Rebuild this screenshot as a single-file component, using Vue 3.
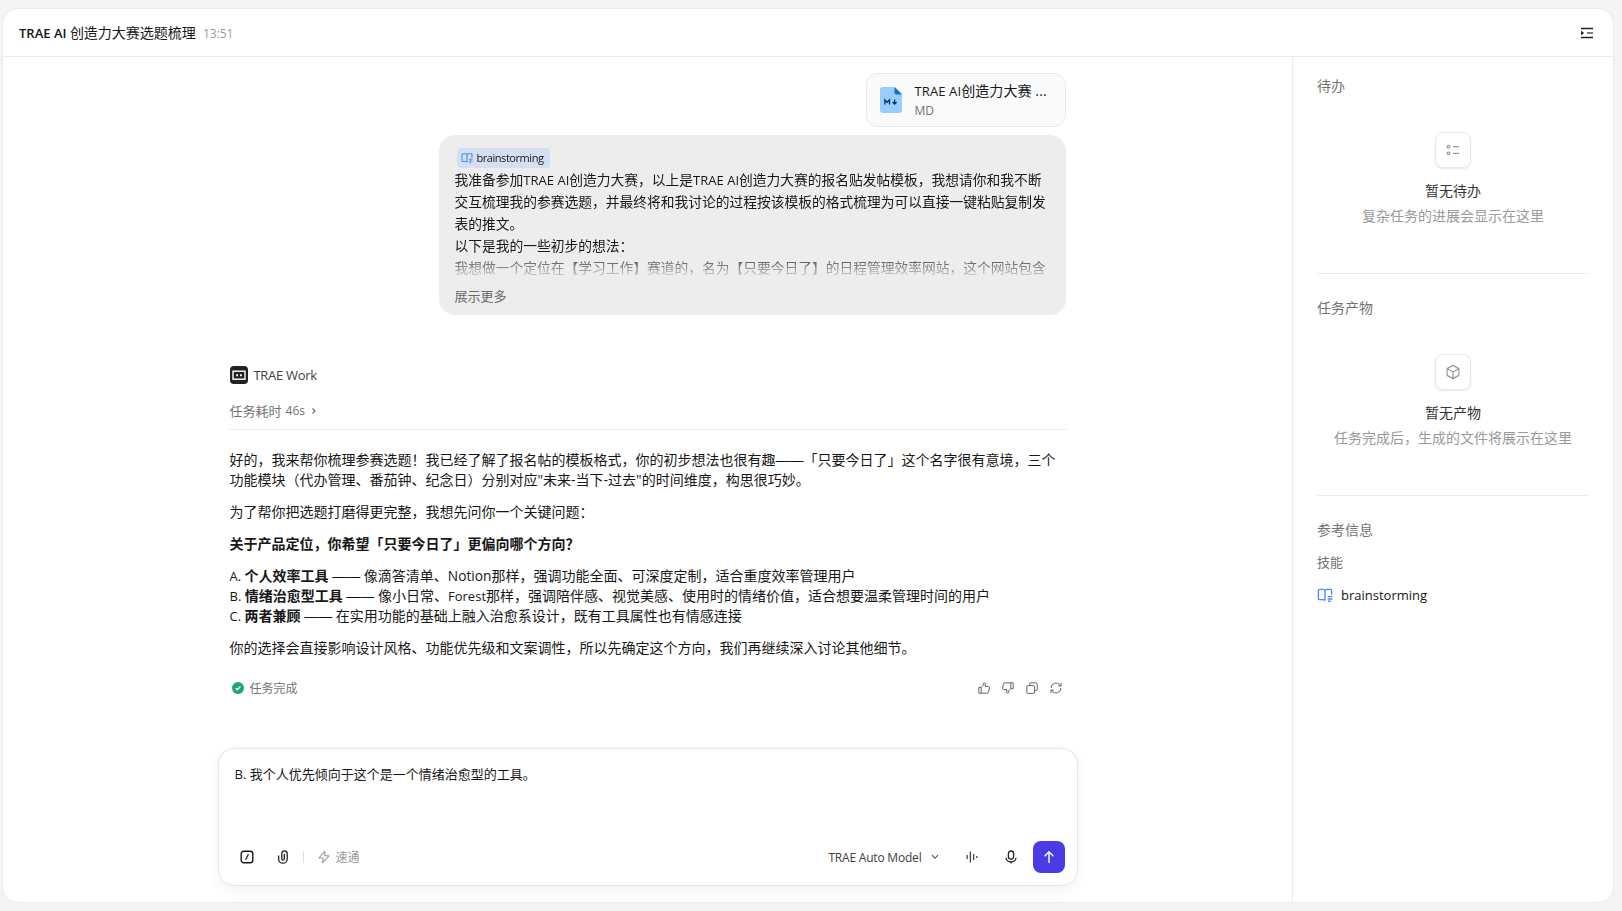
<template>
  <div class="page">
    <div class="panel">
      <header class="header">
        <div class="title"><span class="en">TRAE AI </span>创造力大赛选题梳理</div>
        <div class="time">13:51</div>
        <svg class="toggle" width="14" height="14" viewBox="0 0 14 14">
          <path d="M1 2.5h12M1 11.5h12" stroke="#222" stroke-width="1.3" />
          <path d="M7 7h6" stroke="#555" stroke-width="1.3" />
          <path d="M1 4.8v4.4L4.2 7z" fill="#222" />
        </svg>
      </header>
      <div class="content">
        <main class="main">
          <div class="chat">
            <div class="file">
              <svg class="file-icon" width="22" height="26" viewBox="0 0 22 26">
                <path d="M3 0h12l7 7v16a3 3 0 0 1-3 3H3a3 3 0 0 1-3-3V3a3 3 0 0 1 3-3z" fill="#99cdff" />
                <path d="M14.5 0L22 7.4h-5.5a2 2 0 0 1-2-2z" fill="#1270cc" />
                <path
                  d="M4.9 17.4v-4.6l2.3 2.5 2.3-2.5v4.6M14.6 12.4v4.6M12.6 15l2 2 2-2"
                  fill="none"
                  stroke="#0b3560"
                  stroke-width="1.3"
                />
              </svg>
              <div>
                <div class="file-name"><span class="en">TRAE AI</span>创造力大赛 ...</div>
                <div class="file-type">MD</div>
              </div>
            </div>

            <div class="bubble">
              <div class="bubble-text">
                <div class="tag-line">
                  <span class="tag">
                    <svg width="12" height="12" viewBox="0 0 16 16">
                      <path :d="bookPath" fill="none" stroke="#4c8bf5" stroke-width="1.5" />
                    </svg>
                    brainstorming
                  </span>
                </div>
                <div>
                  我准备参加<span class="en">TRAE AI</span>创造力大赛，以上是<span class="en">TRAE AI</span>创造力大赛的报名贴发帖模板，我想请你和我不断
                </div>
                <div v-for="line in userLines" :key="line">{{ line }}</div>
              </div>
              <div class="more">展示更多</div>
            </div>

            <div class="agent">
              <svg width="18" height="18" viewBox="0 0 18 18">
                <rect width="18" height="18" rx="4" fill="#222" />
                <rect x="3" y="5.2" width="12" height="8" fill="none" stroke="#fff" stroke-width="1.4" />
                <path d="M6.2 8.2h1.8v2H6.2zM10 8.2h1.8v2H10z" fill="#fff" />
              </svg>
              <span>TRAE Work</span>
            </div>
            <div class="cost">
              任务耗时 <span class="en">46s</span>
              <svg width="6" height="8" viewBox="0 0 6 8">
                <path d="M1.5 1.5L4 4 1.5 6.5" fill="none" stroke="#666" stroke-width="1.1" />
              </svg>
            </div>

            <div class="answer">
              <p>
                好的，我来帮你梳理参赛选题！我已经了解了报名帖的模板格式，你的初步想法也很有趣<span class="dash">——</span>「只要今日了」这个名字很有意境，三个<br />功能模块（代办管理、番茄钟、纪念日）分别对应"未来-当下-过去"的时间维度，构思很巧妙。
              </p>
              <p>为了帮你把选题打磨得更完整，我想先问你一个关键问题：</p>
              <p><b>关于产品定位，你希望「只要今日了」更偏向哪个方向？</b></p>
              <p>
                <span class="en">A. </span><b>个人效率工具</b> <span class="dash">——</span> 像滴答清单、<span class="en wide">Notion</span>那样，强调功能全面、可深度定制，适合重度效率管理用户<br />
                <span class="en">B. </span><b>情绪治愈型工具</b> <span class="dash">——</span> 像小日常、<span class="en">Forest</span>那样，强调陪伴感、视觉美感、使用时的情绪价值，适合想要温柔管理时间的用户<br />
                <span class="en">C. </span><b>两者兼顾</b> <span class="dash">——</span> 在实用功能的基础上融入治愈系设计，既有工具属性也有情感连接
              </p>
              <p>你的选择会直接影响设计风格、功能优先级和文案调性，所以先确定这个方向，我们再继续深入讨论其他细节。</p>
            </div>

            <div class="status">
              <svg width="12" height="12" viewBox="0 0 12 12">
                <circle cx="6" cy="6" r="6" fill="#1aa675" />
                <path d="M3.6 6.2l1.7 1.6 3.1-3.3" fill="none" stroke="#fff" stroke-width="1.3" />
              </svg>
              <span>任务完成</span>
              <div class="actions">
                <svg v-for="icon in actions" :key="icon" width="12" height="12" viewBox="0 0 12 12">
                  <path :d="icon" fill="none" stroke="#666" stroke-width="1" stroke-linejoin="round" />
                </svg>
              </div>
            </div>
          </div>

          <div class="composer">
            <div class="draft"><span class="en">B. </span>我个人优先倾向于这个是一个情绪治愈型的工具。</div>
            <div class="tools">
              <svg class="slash" width="14" height="14" viewBox="0 0 14 14">
                <rect x="1.2" y="1.2" width="11.6" height="11.6" rx="2.6" fill="none" stroke="#1a1a1a" stroke-width="1.4" />
                <path d="M8.4 4.2l-2.8 5.6" stroke="#1a1a1a" stroke-width="1.3" />
              </svg>
              <svg class="clip" width="12" height="14" viewBox="0 0 12 14">
                <path
                  d="M1.6 5.6v3.3a4.3 4.3 0 0 0 8.6 0V3.6a2.7 2.7 0 0 0-5.4 0v5.2a1.25 1.25 0 0 0 2.5 0V4"
                  fill="none"
                  stroke="#222"
                  stroke-width="1.3"
                />
              </svg>
              <i class="split"></i>
              <svg class="bolt" width="12" height="14" viewBox="0 0 12 14">
                <path d="M7 1.2L1 8h4.2L4.6 12.6 11 5.8H6.7z" fill="none" stroke="#999" stroke-width="1.1" stroke-linejoin="round" />
              </svg>
              <span class="fast">速通</span>
              <span class="model">TRAE Auto Model</span>
              <svg class="arrow" width="8" height="6" viewBox="0 0 8 6">
                <path d="M1 1.2l3 3 3-3" fill="none" stroke="#555" stroke-width="1.1" />
              </svg>
              <svg class="wave" width="12" height="12" viewBox="0 0 12 12">
                <path d="M1.2 4v4M4.4 .6v10.8M7.6 3v6M10.8 5v2" stroke="#444" stroke-width="1.3" />
              </svg>
              <svg class="mic" width="12" height="14" viewBox="0 0 12 14">
                <rect x="3.4" y="1" width="5.2" height="8.2" rx="2.6" fill="none" stroke="#222" stroke-width="1.3" />
                <path d="M1 7.8a5 4 0 0 0 10 0M6 11.6v1.8" fill="none" stroke="#222" stroke-width="1.3" />
              </svg>
              <button class="send">
                <svg width="12" height="14" viewBox="0 0 12 14">
                  <path d="M6 13V2M1.6 6.2L6 1.8l4.4 4.4" fill="none" stroke="#fff" stroke-width="1.4" />
                </svg>
              </button>
            </div>
          </div>
        </main>

        <aside class="side">
          <section v-for="item in sections" :key="item.title" class="section">
            <div class="section-title">{{ item.title }}</div>
            <div class="empty-icon">
              <svg width="16" height="16" viewBox="0 0 16 16">
                <path :d="item.icon" fill="none" stroke="#999" stroke-width="1.2" stroke-linejoin="round" />
              </svg>
            </div>
            <div class="empty-title">{{ item.empty }}</div>
            <div class="empty-desc">{{ item.desc }}</div>
          </section>
          <section class="section last">
            <div class="section-title">参考信息</div>
            <div class="sub-title">技能</div>
            <div class="skill">
              <svg width="16" height="16" viewBox="0 0 16 16">
                <path :d="bookPath" fill="none" stroke="#4c8bf5" stroke-width="1.4" />
              </svg>
              <span>brainstorming</span>
            </div>
          </section>
        </aside>
      </div>
    </div>
  </div>
</template>

<script setup>
  const bookPath =
    'M8 13.6V3.6M8 3.6C7.5 2.7 6.8 2.4 6 2.4H2.4a1 1 0 0 0-1 1v8.2a1 1 0 0 0 1 1H6c.8 0 1.5.3 2 1M8 3.6c.5-.9 1.2-1.2 2-1.2h3.6a1 1 0 0 1 1 1v4.4M10.6 9.6h4.8M10.6 12h4.8M11 14.3h2.6';

  const userLines = [
    '交互梳理我的参赛选题，并最终将和我讨论的过程按该模板的格式梳理为可以直接一键粘贴复制发',
    '表的推文。',
    '以下是我的一些初步的想法：',
    '我想做一个定位在【学习工作】赛道的，名为【只要今日了】的日程管理效率网站，这个网站包含',
  ];

  // like, dislike, copy, retry
  const actions = [
    'M.8 5.4h2.4v5.8H.8zM3.2 5.4L5.4 3V1.6a1 1 0 0 1 1.9 0L7.2 4.4h3.1a1.1 1.1 0 0 1 1.1 1.3l-.8 4.4a1.3 1.3 0 0 1-1.3 1.1H3.2',
    'M11.2 6.6H8.8V.8h2.4zM8.8 6.6L6.6 9v1.4a1 1 0 0 1-1.9 0l.1-2.8H1.7A1.1 1.1 0 0 1 .6 6.3L1.4 1.9A1.3 1.3 0 0 1 2.7.8h6.1',
    'M2.2 3.6h5a1.4 1.4 0 0 1 1.4 1.4v5a1.4 1.4 0 0 1-1.4 1.4h-5A1.4 1.4 0 0 1 .8 10V5a1.4 1.4 0 0 1 1.4-1.4zM3.4 3.4V2.2A1.4 1.4 0 0 1 4.8.8h5a1.4 1.4 0 0 1 1.4 1.4v5a1.4 1.4 0 0 1-1.4 1.4H8.8',
    'M1 6a5 5 0 0 1 8.9-3.1l.9 1M11 1v3H8.2M11 6a5 5 0 0 1-8.9 3.1l-.9-1M1 11V8h2.8',
  ];

  const sections = [
    {
      title: '待办',
      empty: '暂无待办',
      desc: '复杂任务的进展会显示在这里',
      icon: 'M2.2 4.7a1.3 1.3 0 1 0 2.6 0a1.3 1.3 0 1 0-2.6 0M2.2 11.3a1.3 1.3 0 1 0 2.6 0a1.3 1.3 0 1 0-2.6 0M8 4.7h6M8 11.3h6',
    },
    {
      title: '任务产物',
      empty: '暂无产物',
      desc: '任务完成后，生成的文件将展示在这里',
      icon: 'M8 1.4l5.9 3.2v6.8L8 14.6l-5.9-3.2V4.6zM2.4 4.8L8 8l5.6-3.2M8 8v6.4',
    },
  ];
</script>

<style>
  body {
    margin: 0;
    background: #f4f4f4;
  }
</style>

<style scoped>
  .page {
    box-sizing: border-box;
    height: 911px;
    padding: 8px 8px 8px 2px;
    font-family: 'Open Sans', 'Noto Sans CJK SC', sans-serif;
    font-size: 14px;
    color: #171717;
    white-space: nowrap;
    overflow: hidden;
  }
  svg {
    display: block;
    flex-shrink: 0;
  }
  .en {
    font-size: 0.93em;
    line-height: 1;
    white-space: pre;
  }
  .en.wide {
    font-size: 0.98em;
  }
  .dash {
    font-family: 'Liberation Sans', sans-serif;
    line-height: 1;
  }
  .panel {
    box-sizing: border-box;
    display: flex;
    flex-direction: column;
    height: 100%;
    border: 1px solid #ececec;
    border-radius: 16px;
    background: #fff;
    overflow: hidden;
  }
  .header {
    display: flex;
    align-items: center;
    height: 47px;
    padding: 0 19px 0 16px;
    border-bottom: 1px solid #ececec;
  }
  .title {
    margin-top: -1px;
  }
  .title .en {
    font-weight: 600;
  }
  .time {
    margin: 1px 0 0 7px;
    font-size: 12px;
    color: #999;
  }
  .toggle {
    margin-left: auto;
  }
  .content {
    display: flex;
    flex: 1;
    min-height: 0;
  }
  .main {
    display: flex;
    flex: 1;
    flex-direction: column;
    align-items: center;
  }
  .chat {
    display: flex;
    flex-direction: column;
    width: 836px;
    height: 691px;
  }

  .file {
    box-sizing: border-box;
    display: flex;
    align-self: flex-end;
    align-items: center;
    width: 200px;
    height: 54px;
    margin-top: 16px;
    padding-left: 13px;
    border: 1px solid #e8e8e8;
    border-radius: 12px;
    background: #fafafa;
  }
  .file-icon {
    margin-right: 13px;
  }
  .file-name {
    font-size: 14px;
    line-height: 20px;
    letter-spacing: 0.1px;
  }
  .file-type {
    font-size: 12px;
    line-height: 18px;
    padding-top: 1px;
    margin-bottom: -1px;
    color: #737373;
  }

  .bubble {
    box-sizing: border-box;
    align-self: flex-end;
    width: 627px;
    height: 180px;
    margin-top: 8px;
    padding: 12px 16px;
    border-radius: 16px;
    background: #ededed;
  }
  .bubble-text {
    height: 129px;
    overflow: hidden;
    font-size: 13.75px;
    line-height: 22px;
    -webkit-mask-image: linear-gradient(#000 105px, transparent 133px);
    mask-image: linear-gradient(#000 105px, transparent 133px);
  }
  .bubble-text .en {
    font-size: 0.95em;
  }
  .tag-line {
    display: flex;
    align-items: center;
    height: 22px;
  }
  .tag {
    box-sizing: border-box;
    display: flex;
    align-items: center;
    gap: 4px;
    width: 93px;
    height: 20px;
    margin-left: 2px;
    padding-left: 4px;
    border-radius: 4px;
    background: #d5dff2;
    font-size: 11px;
    font-weight: 500;
    line-height: 20px;
    letter-spacing: -0.45px;
  }
  .more {
    margin-top: 9px;
    font-size: 13px;
    line-height: 22px;
    color: #6b6b6b;
  }

  .agent {
    display: flex;
    align-items: center;
    gap: 6px;
    height: 20px;
    margin-top: 50px;
    font-size: 13px;
    letter-spacing: -0.3px;
    color: #404040;
  }
  .cost {
    display: flex;
    align-items: center;
    height: 35px;
    padding-bottom: 1px;
    margin-top: 8px;
    border-bottom: 1px solid #ececec;
    font-size: 13px;
    color: #737373;
  }
  .cost .en {
    margin-left: 4px;
    line-height: normal;
  }
  .cost svg {
    margin-left: 6px;
  }

  .answer {
    margin-top: 20px;
    line-height: 20px;
  }
  .answer p {
    margin: 0 0 12px;
  }
  .answer b {
    font-weight: 700;
  }

  .status {
    display: flex;
    align-items: center;
    height: 20px;
    margin-top: 8px;
    padding: 0 4px 0 2px;
    font-size: 12px;
    color: #737373;
  }
  .status span {
    margin-left: 6px;
  }
  .actions {
    display: flex;
    gap: 12px;
    margin-left: auto;
  }

  .composer {
    box-sizing: border-box;
    display: flex;
    flex-direction: column;
    justify-content: space-between;
    width: 860px;
    height: 138px;
    padding: 15px 12px 12px 16px;
    border: 1px solid #e5e5e5;
    border-radius: 16px;
    background: #fff;
    box-shadow: 0 4px 14px rgba(0, 0, 0, 0.05);
  }
  .draft {
    font-size: 13px;
    line-height: 20px;
  }
  .draft .en {
    font-size: 13px;
  }
  .tools {
    display: flex;
    align-items: center;
    height: 32px;
    padding-left: 5px;
  }
  .clip {
    margin-left: 23px;
  }
  .split {
    width: 1px;
    height: 12px;
    margin-left: 14px;
    background: #e0e0e0;
  }
  .bolt {
    margin-left: 14px;
  }
  .fast {
    margin-left: 6px;
    font-size: 12px;
    color: #999;
  }
  .model {
    margin-left: auto;
    font-size: 12px;
    letter-spacing: -0.2px;
    color: #404040;
  }
  .arrow {
    margin-left: 9px;
  }
  .wave {
    margin-left: 27px;
  }
  .mic {
    margin-left: 27px;
  }
  .send {
    display: flex;
    align-items: center;
    justify-content: center;
    width: 32px;
    height: 32px;
    margin-left: 16px;
    padding: 0;
    border: 0;
    border-radius: 8px;
    background: #4a3ce2;
  }

  .side {
    box-sizing: border-box;
    width: 321px;
    padding: 0 24px;
    border-left: 1px solid #ececec;
  }
  .section {
    box-sizing: border-box;
    display: flex;
    flex-direction: column;
    align-items: center;
    height: 222px;
    padding-top: 23px;
    border-bottom: 1px solid #ececec;
    line-height: 22px;
  }
  .section:first-child {
    height: 217px;
    padding-top: 18px;
  }
  .section.last {
    align-items: flex-start;
    border: 0;
  }
  .section-title {
    align-self: flex-start;
    color: #737373;
  }
  .empty-icon {
    box-sizing: border-box;
    display: flex;
    align-items: center;
    justify-content: center;
    width: 36px;
    height: 36px;
    margin-top: 35px;
    border: 1px solid #e8e8e8;
    border-radius: 8px;
    box-shadow: 0 1px 2px rgba(0, 0, 0, 0.1);
  }
  .empty-title {
    margin-top: 12px;
    color: #333;
  }
  .empty-desc {
    margin-top: 3px;
    color: #999;
  }
  .sub-title {
    margin-top: 10px;
    font-size: 13px;
    color: #737373;
  }
  .skill {
    display: flex;
    align-items: center;
    gap: 8px;
    height: 22px;
    margin-top: 11px;
    font-size: 13px;
  }
</style>
